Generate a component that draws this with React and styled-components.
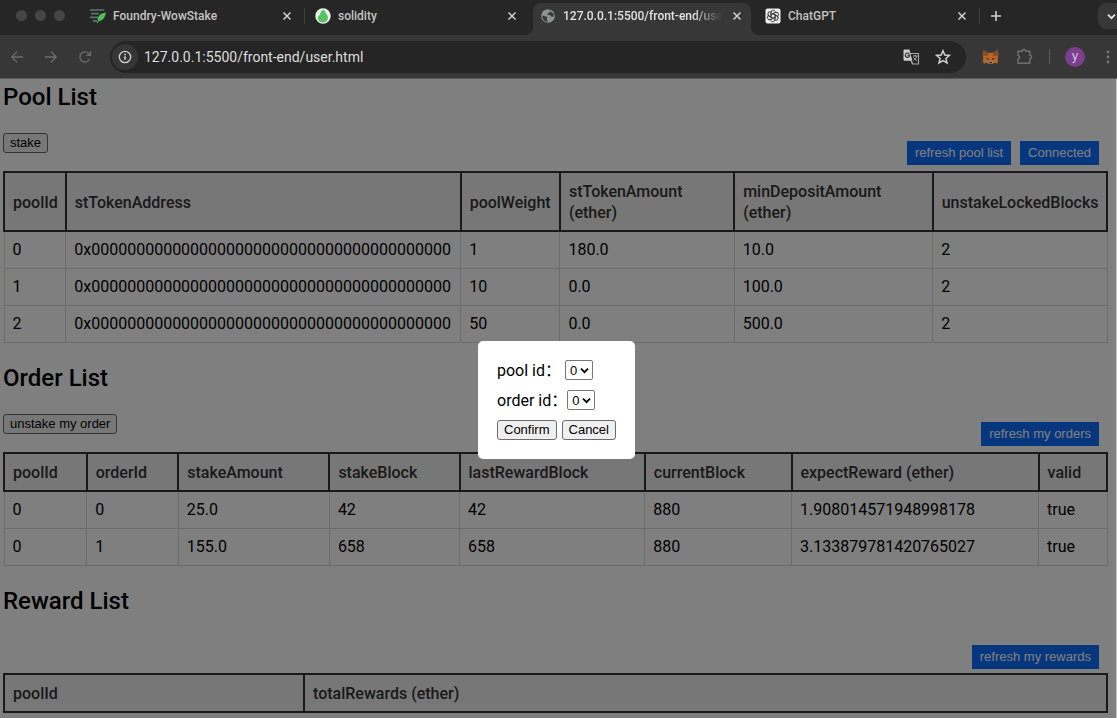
import React from "react";
import styled, { createGlobalStyle, css } from "styled-components";

const pageFont = `Roboto, "Liberation Sans", "Noto Sans CJK SC", sans-serif`;

const GlobalStyle = createGlobalStyle`
  *, *::before, *::after { box-sizing: border-box; }
  body { margin: 0; font-family: ${pageFont}; }
  button, select { font-family: "Liberation Sans", Arial, sans-serif; }
`;

const Browser = styled.div`
  display: flex;
  flex-direction: column;
  min-height: 100vh;
  background: #373737;
`;

/* Tab strip */

const TabStrip = styled.div`
  display: flex;
  align-items: flex-start;
  height: 35px;
  background: #262626;
  overflow: hidden;
`;

const WindowControls = styled.div`
  display: flex;
  flex: none;
  gap: 8px;
  width: 80px;
  padding: 10px 0 0 16px;
`;

const WindowDot = styled.span`
  width: 11px;
  height: 11px;
  border-radius: 50%;
  background: #454545;
`;

const Tab = styled.div`
  display: flex;
  flex: 0 1 225px;
  min-width: 0;
  padding-left: 3px;
`;

const TabBody = styled.div`
  position: relative;
  display: flex;
  align-items: center;
  flex: 1;
  gap: 7px;
  min-width: 0;
  height: 32px;
  margin: 3px 3px 0 0;
  padding: 0 9px 7px 7px;
  border-radius: 8px 8px 0 0;
  color: ${(p) => (p.$active ? "#e2e2e2" : "#c4c4c4")};
  ${(p) =>
    p.$active &&
    css`
      background: #373737;
      &::before,
      &::after {
        content: "";
        position: absolute;
        bottom: 0;
        width: 8px;
        height: 8px;
      }
      &::before {
        right: 100%;
        background: radial-gradient(circle at 0 0, transparent 8px, #373737 8px);
      }
      &::after {
        left: 100%;
        background: radial-gradient(circle at 100% 0, transparent 8px, #373737 8px);
      }
    `}
`;

const TabTitle = styled.span`
  flex: 1;
  min-width: 0;
  overflow: hidden;
  white-space: nowrap;
  font-size: 12px;
  font-weight: 500;
  line-height: 16px;
  ${(p) =>
    p.$fade &&
    css`
      mask-image: linear-gradient(to right, #000 80%, transparent 98%);
    `}
`;

const TabDivider = styled.span`
  flex: none;
  width: 1px;
  height: 16px;
  margin-top: 8px;
  background: ${(p) => (p.$visible ? "#3e3e3e" : "transparent")};
`;

const IconButton = styled.button`
  display: flex;
  align-items: center;
  justify-content: center;
  flex: none;
  width: ${(p) => p.$width}px;
  height: ${(p) => p.$height || 32}px;
  padding: 0;
  border: 0;
  background: none;
  color: ${(p) => p.$color || "#cfcfcf"};
`;

const TabSearch = styled.button`
  display: flex;
  align-items: center;
  flex: none;
  width: 19px;
  height: 26px;
  margin: 3px 0 0 auto;
  padding: 0 0 0 9px;
  border: 0;
  border-radius: 8px 0 0 8px;
  background: #373737;
  color: #e2e2e2;
`;

/* Toolbar */

const Toolbar = styled.div`
  display: flex;
  align-items: center;
  height: 44px;
  border-bottom: 1px solid #5a5a5a;
  background: #373737;
`;

const AddressBar = styled.div`
  display: flex;
  align-items: center;
  flex: 1;
  min-width: 0;
  height: 32px;
  margin: 0 7px 0 8px;
  padding: 0 8px 0 2px;
  border-radius: 16px;
  background: #252525;
`;

const SiteInfo = styled(IconButton)`
  margin-right: 6px;
  border-radius: 50%;
  background: #363636;
`;

const Address = styled.input`
  flex: 1;
  min-width: 0;
  padding: 0;
  border: 0;
  outline: 0;
  background: none;
  color: #dedede;
  font-family: ${pageFont};
  font-size: 14px;
`;

const ToolbarDivider = styled.span`
  flex: none;
  width: 1px;
  height: 15px;
  margin: 0 15px 0 8px;
  background: #5c5c5c;
`;

const Avatar = styled.button`
  flex: none;
  width: 20px;
  height: 20px;
  margin-right: 14px;
  padding: 0 0 2px;
  border: 0;
  border-radius: 50%;
  background: #7b3f8d;
  color: #dcc8e2;
  font-size: 12px;
  line-height: 16px;
`;

/* Page */

const Viewport = styled.div`
  position: relative;
  display: flex;
  flex: 1;
  border-right: 1px solid #c4c4c4;
  background: #fff;
`;

const Page = styled.main`
  flex: 1;
  min-width: 0;
  padding: 0 8px 5px 3px;
  color: #000;
  font-size: 16px;
  line-height: 21px;
`;

const Heading = styled.h2`
  margin: 0;
  padding-top: ${(p) => (p.$first ? 2 : 19)}px;
  font-size: 24px;
  font-weight: 500;
  line-height: 33px;
`;

const Actions = styled.div`
  display: flex;
  align-items: flex-start;
  justify-content: space-between;
`;

const LeftActions = styled.div`
  display: flex;
  padding: ${(p) => (p.$empty ? "0" : "19px 0 18px")};
`;

const RightActions = styled.div`
  display: flex;
  gap: 9px;
  padding: 27px 9px 4px 0;
`;

const PlainButton = styled.button`
  height: 20px;
  padding: 0 6px;
  border: 1px solid #6b6b6b;
  border-radius: 3px;
  background: #efefef;
  color: #000;
  font-size: 13px;
  line-height: 16px;
`;

const BlueButton = styled.button`
  height: 24px;
  padding: 0 8px;
  border: 0;
  background: #0d6efd;
  color: #fff;
  font-size: 13px;
  line-height: 16px;
`;

const Table = styled.table`
  width: 100%;
  table-layout: fixed;
  border-collapse: collapse;
`;

const Col = styled.col`
  width: ${(p) => p.$share}%;
`;

const HeadCell = styled.th`
  padding: 8px 8px 7px;
  border: 2px solid #333;
  background: #eee;
  color: #333;
  font-weight: 500;
  text-align: left;
`;

const Cell = styled.td`
  padding: 8px;
  border: 1px solid #d8d8d8;
  line-height: 20px;
  white-space: nowrap;
`;

/* Dialog */

const Overlay = styled.div`
  position: absolute;
  inset: 0;
  display: flex;
  align-items: center;
  justify-content: center;
  padding: 3px 3px 0 0;
  background: rgba(0, 0, 0, 0.5);
`;

const Dialog = styled.form`
  display: flex;
  flex-direction: column;
  gap: 10px;
  padding: 19px;
  border-radius: 5px;
  background: #fff;
  color: #000;
  font-size: 16px;
  line-height: 21px;
`;

const Field = styled.div`
  display: flex;
  align-items: center;
  height: 20px;
`;

const FieldLabel = styled.label`
  min-width: 68px;
`;

const SelectBox = styled.span`
  position: relative;
  display: flex;
  svg {
    position: absolute;
    right: 4px;
    top: 6px;
    pointer-events: none;
  }
`;

const Select = styled.select`
  appearance: none;
  width: 28px;
  height: 20px;
  padding: 0 0 0 4px;
  border: 1px solid #767676;
  border-radius: 2px;
  background: #fff;
  color: #000;
  font-size: 13px;
`;

const DialogButtons = styled.div`
  display: flex;
  gap: 5px;
`;

/* Icons */

const Stroke = ({ size, width = 1.5, box = 16, children }) => (
  <svg width={size} height={size} viewBox={`0 0 ${box} ${box}`} fill="none" stroke="currentColor" strokeWidth={width} aria-hidden="true">
    {children}
  </svg>
);

const CloseIcon = () => (
  <Stroke size={10} box={10} width={1.5}><path d="M1.5 1.5l7 7M8.5 1.5l-7 7" /></Stroke>
);

const FoundryIcon = () => (
  <svg width="16" height="16" viewBox="0 0 16 16" aria-hidden="true">
    <path d="M0 2h14M1 5.700h8M0 9.300h8M3 12.800h4" stroke="#5d7570" strokeWidth="1.700" />
    <path d="M15.800 4.500c-4.300.6-7.500 2.600-8 6-.1.800 0 1.500.2 2.200L6.600 15l.9.300 1.500-2.200c3.800-.6 6.400-3.600 6.800-8.600z" fill="#4fc257" />
  </svg>
);

const SolidityIcon = () => (
  <svg width="16" height="16" viewBox="0 0 16 16" aria-hidden="true">
    <circle cx="8" cy="8" r="7.700" fill="#e6f5e8" />
    <path d="M7.500 2.200c1.800-.4 3.100.8 3 2.800 1.700 1.300 2.800 3.500 2.300 5.800-.5 2.300-2.300 3.700-4.800 3.700s-4.900-1.300-5.100-3.800c-.1-1.800.8-3 2.100-3.900.5-2 .8-4.200 2.500-4.600z" fill="#58c163" />
  </svg>
);

const GlobeIcon = () => (
  <svg width="16" height="16" viewBox="0 0 16 16" aria-hidden="true">
    <circle cx="8" cy="8" r="6.800" fill="#8f9194" />
    <path d="M2.300 7.500l3.500 1c1 .3 1.800 1 1.400 1.900l-.4 1c-.2.600.1 1.100.8 1.300l-.3 1.300C4.500 13.700 2.200 11 2.300 7.500zM8.500 2.300l1.800.5-.8 1.900-2 .9.300 1.500 2.700.2 1 1.500 2-.2c.3-.9.200-2.300-.4-3.400" fill="#373737" />
  </svg>
);

const ChatGptIcon = () => (
  <svg width="16" height="16" viewBox="0 0 16 16" aria-hidden="true">
    <rect x=".5" y=".5" width="15" height="15" rx="2" fill="#ededed" />
    <g fill="none" stroke="#333" strokeWidth=".9" strokeLinejoin="round">
      {[0, 60, 120, 180, 240, 300].map((a) => (
        <path key={a} transform={`rotate(${a} 8 8)`} d="M6 9.100V4.700c0-2.700 3.400-3.400 4.400-1.100M6 6.800l3.800-2.200c.8-.4 1.600-.3 2.200.2" />
      ))}
    </g>
  </svg>
);

const PlusIcon = () => <Stroke size={12} box={12} width={1.6}><path d="M6 1v10M1 6h10" /></Stroke>;
const ChevronIcon = ({ size = 9 }) => (
  <Stroke size={size} box={9} width={1.8}><path d="M1 2.700l3.500 3.500L8 2.700" /></Stroke>
);
const BackIcon = () => <Stroke size={14}><path d="M15 8H2M8 2L2 8l6 6" /></Stroke>;
const ForwardIcon = () => <Stroke size={14}><path d="M1 8h13M8 2l6 6-6 6" /></Stroke>;
const ReloadIcon = () => (
  <Stroke size={14}><path d="M13.300 10.300A5.800 5.800 0 1 1 12.300 4.200L14 6M14.200 1.500V6.200H9.500" /></Stroke>
);
const InfoIcon = () => (
  <Stroke size={14}><circle cx="8" cy="8" r="6.500" /><path d="M8 7.200v4M8 4.300v1.700" strokeWidth="1.800" /></Stroke>
);
const TranslateIcon = () => (
  <svg width="17" height="16" viewBox="0 0 17 16" aria-hidden="true">
    <path d="M7 4.500h8.500v10.500H9.500L8 12" fill="none" stroke="#a9a9a9" strokeWidth="1.100" />
    <path d="M1.500.6h5l2.800 11.200H1.500a1 1 0 0 1-1-1V1.600a1 1 0 0 1 1-1z" fill="#cfcfcf" />
    <path d="M6.300 4.900a2.200 2.200 0 1 0 .4 1.500H4.700" fill="none" stroke="#2b2b2b" strokeWidth="1.100" />
    <path d="M10 7h4.500M12.200 6v1M13.800 7c-.4 1.800-1.600 3.200-3.300 4.300M10.800 8.500c.7 1.300 1.700 2.400 3.200 3.200M8.500 12l1.300 2.500" fill="none" stroke="#b9b9b9" strokeWidth=".9" />
  </svg>
);
const StarIcon = () => (
  <Stroke size={16}><path d="M8 1.800l1.800 4.200 4.600.4-3.500 3 1.100 4.500L8 11.500l-4 2.400 1.100-4.500-3.500-3L6.200 6z" strokeWidth="1.500" /></Stroke>
);
const FoxIcon = () => (
  <svg width="17" height="16" viewBox="0 0 17 16" aria-hidden="true">
    <path d="M1.300 1l5.200 2.700h4L15.700 1l.8 4-.9 4.500.7 2.500-1.200 2.600-3.300-.9-1.800 1.300H7l-1.800-1.300-3.300.9L.7 12l.7-2.500L.5 5z" fill="#b5652a" />
    <path d="M1.300 1l5.200 2.700-.8 3L1 6.500.5 5zM15.700 1l-5.200 2.700.8 3L16 6.500l.5-1.500z" fill="#84482a" />
    <path d="M4 9l3 .4-.7 1.600zM13 9l-3 .4.700 1.600z" fill="#2f2420" />
    <path d="M5.200 13.700l1.500-1.500h3.600l1.500 1.500-1.800 1.300H7z" fill="#9a8474" />
    <path d="M7.200 13h2.600l.2 1.200H7z" fill="#2f2420" />
  </svg>
);
const ExtensionIcon = () => (
  <Stroke size={17} box={17}>
    <path d="M2 3.200h4.300c0-2.200 3.400-2.200 3.400 0h4.100v4c2.300.2 2.300 3.500 0 3.700v4.400H2v-4.200c2.300-.3 2.300-3.400 0-3.700z" strokeLinejoin="round" />
  </Stroke>
);
const DotsIcon = () => (
  <svg width="4" height="16" viewBox="0 0 4 16" fill="currentColor" aria-hidden="true">
    <circle cx="2" cy="3" r="1.400" /><circle cx="2" cy="8" r="1.400" /><circle cx="2" cy="13" r="1.400" />
  </svg>
);

/* Data */

const tabs = [
  { title: "Foundry-WowStake", icon: <FoundryIcon />, divider: true },
  { title: "solidity", icon: <SolidityIcon /> },
  { title: "127.0.0.1:5500/front-end/use", icon: <GlobeIcon />, active: true },
  { title: "ChatGPT", icon: <ChatGptIcon />, divider: true },
];

const zeroAddress = "0x" + "0".repeat(40);

const pools = {
  shares: [5.6, 35.8, 9, 15.8, 18, 15.8],
  head: ["poolId", "stTokenAddress", "poolWeight", ["stTokenAmount", "(ether)"], ["minDepositAmount", "(ether)"], "unstakeLockedBlocks"],
  rows: [
    ["0", zeroAddress, "1", "180.0", "10.0", "2"],
    ["1", zeroAddress, "10", "0.0", "100.0", "2"],
    ["2", zeroAddress, "50", "0.0", "500.0", "2"],
  ],
};

const orders = {
  shares: [7.5, 8.3, 13.7, 11.8, 16.8, 13.3, 22.4, 6.2],
  head: ["poolId", "orderId", "stakeAmount", "stakeBlock", "lastRewardBlock", "currentBlock", "expectReward (ether)", "valid"],
  rows: [
    ["0", "0", "25.0", "42", "42", "880", "1.908014571948998178", "true"],
    ["0", "1", "155.0", "658", "658", "880", "3.133879781420765027", "true"],
  ],
};

const rewards = { shares: [27.2, 72.8], head: ["poolId", "totalRewards (ether)"], rows: [] };

function DataTable({ data }) {
  return (
    <Table>
      <colgroup>{data.shares.map((s, i) => <Col key={i} $share={s} />)}</colgroup>
      <thead>
        <tr>
          {data.head.map((h, i) => (
            <HeadCell key={i} scope="col">{Array.isArray(h) ? <>{h[0]}<br />{h[1]}</> : h}</HeadCell>
          ))}
        </tr>
      </thead>
      <tbody>
        {data.rows.map((row, r) => (
          <tr key={r}>{row.map((value, c) => <Cell key={c}>{value}</Cell>)}</tr>
        ))}
      </tbody>
    </Table>
  );
}

function Section({ title, first, left, right, data }) {
  return (
    <section>
      <Heading $first={first}>{title}</Heading>
      <Actions>
        <LeftActions $empty={!left}>{left && <PlainButton type="button">{left}</PlainButton>}</LeftActions>
        <RightActions>{right.map((r) => <BlueButton key={r} type="button">{r}</BlueButton>)}</RightActions>
      </Actions>
      <DataTable data={data} />
    </section>
  );
}

function IdField({ id, label }) {
  return (
    <Field>
      <FieldLabel htmlFor={id}>{label}</FieldLabel>
      <SelectBox>
        <Select id={id} defaultValue="0"><option>0</option></Select>
        <ChevronIcon />
      </SelectBox>
    </Field>
  );
}

export default function App() {
  return (
    <Browser>
      <GlobalStyle />
      <TabStrip>
        <WindowControls><WindowDot /><WindowDot /><WindowDot /></WindowControls>
        {tabs.map((t) => (
          <Tab key={t.title}>
            <TabBody $active={t.active}>
              {t.icon}
              <TabTitle $fade={t.active}>{t.title}</TabTitle>
              <IconButton $width={10} $height={16} aria-label="Close tab"><CloseIcon /></IconButton>
            </TabBody>
            <TabDivider $visible={t.divider} />
          </Tab>
        ))}
        <IconButton $width={32} aria-label="New tab"><PlusIcon /></IconButton>
        <TabSearch aria-label="Search tabs"><ChevronIcon /></TabSearch>
      </TabStrip>
      <Toolbar>
        <IconButton $width={34} $color="#6c6c6c" aria-label="Back"><BackIcon /></IconButton>
        <IconButton $width={34} $color="#6c6c6c" aria-label="Forward"><ForwardIcon /></IconButton>
        <IconButton $width={34} $color="#6c6c6c" aria-label="Reload"><ReloadIcon /></IconButton>
        <AddressBar>
          <SiteInfo $width={26} $height={26} aria-label="Site information"><InfoIcon /></SiteInfo>
          <Address aria-label="Address" defaultValue="127.0.0.1:5500/front-end/user.html" />
          <IconButton $width={31} aria-label="Translate"><TranslateIcon /></IconButton>
          <IconButton $width={31} aria-label="Bookmark"><StarIcon /></IconButton>
        </AddressBar>
        <IconButton $width={34} aria-label="Wallet"><FoxIcon /></IconButton>
        <IconButton $width={34} $color="#707070" aria-label="Extensions"><ExtensionIcon /></IconButton>
        <ToolbarDivider />
        <Avatar aria-label="Profile">y</Avatar>
        <IconButton $width={18} $color="#777" aria-label="Menu"><DotsIcon /></IconButton>
      </Toolbar>
      <Viewport>
        <Page>
          <Section title="Pool List" first left="stake" right={["refresh pool list", "Connected"]} data={pools} />
          <Section title="Order List" left="unstake my order" right={["refresh my orders"]} data={orders} />
          <Section title="Reward List" right={["refresh my rewards"]} data={rewards} />
        </Page>
        <Overlay>
          <Dialog role="dialog" aria-label="Unstake order">
            <IdField id="pool-id" label="pool id：" />
            <IdField id="order-id" label="order id：" />
            <DialogButtons>
              <PlainButton type="button">Confirm</PlainButton>
              <PlainButton type="button">Cancel</PlainButton>
            </DialogButtons>
          </Dialog>
        </Overlay>
      </Viewport>
    </Browser>
  );
}
